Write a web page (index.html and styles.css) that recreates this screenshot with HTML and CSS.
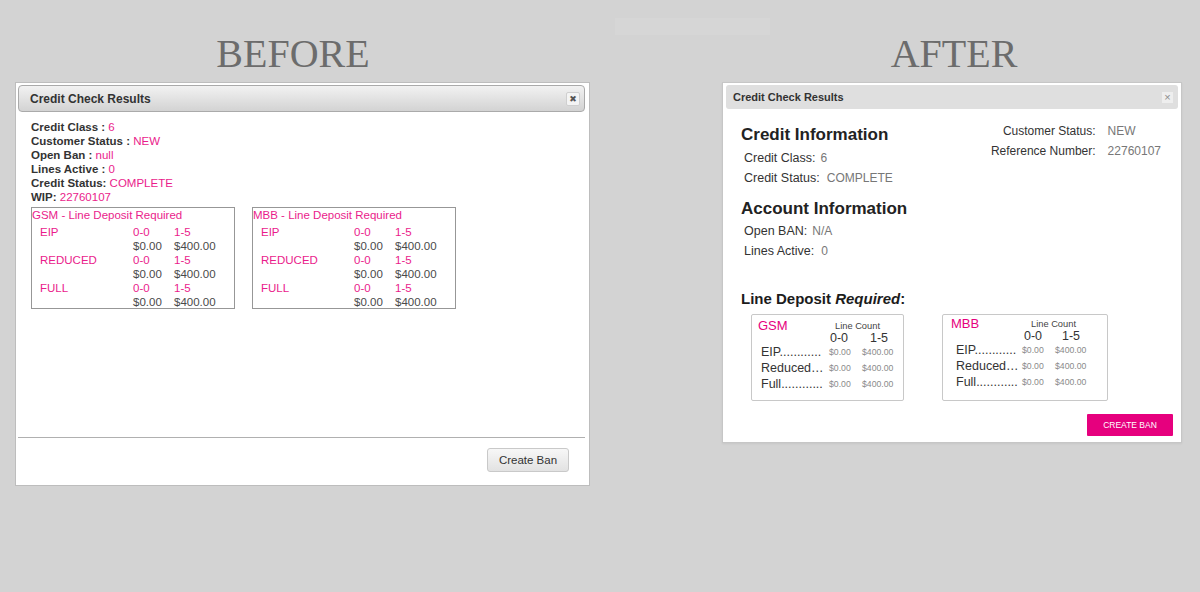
FILE: index.html
```html
<!DOCTYPE html>
<html lang="en">
<head>
<meta charset="utf-8">
<title>Credit Check Results – Before / After</title>
<link rel="stylesheet" href="styles.css">
</head>
<body>
<div class="glare"></div>
<main class="page">
  <section class="col col--before">
    <h1 class="stage-title stage-title--before">BEFORE</h1>
    <div class="old-dialog">
      <div class="old-header">
        <span class="old-title">Credit Check Results</span>
        <span class="old-close">✖</span>
      </div>
      <div class="old-body">
        <div class="old-line"><b>Credit Class :</b> <span class="pink">6</span></div>
        <div class="old-line"><b>Customer Status :</b> <span class="pink">NEW</span></div>
        <div class="old-line"><b>Open Ban :</b> <span class="pink">null</span></div>
        <div class="old-line"><b>Lines Active :</b> <span class="pink">0</span></div>
        <div class="old-line"><b>Credit Status:</b> <span class="pink">COMPLETE</span></div>
        <div class="old-line"><b>WIP:</b> <span class="pink">22760107</span></div>
        <div class="old-tables">
          <div class="old-table">
            <div class="old-table-title pink">GSM - Line Deposit Required</div>
            <div class="old-grid">
              <span class="pink">EIP</span><span class="pink">0-0</span><span class="pink">1-5</span>
              <span></span><span>$0.00</span><span>$400.00</span>
              <span class="pink">REDUCED</span><span class="pink">0-0</span><span class="pink">1-5</span>
              <span></span><span>$0.00</span><span>$400.00</span>
              <span class="pink">FULL</span><span class="pink">0-0</span><span class="pink">1-5</span>
              <span></span><span>$0.00</span><span>$400.00</span>
            </div>
          </div>
          <div class="old-table">
            <div class="old-table-title pink">MBB - Line Deposit Required</div>
            <div class="old-grid">
              <span class="pink">EIP</span><span class="pink">0-0</span><span class="pink">1-5</span>
              <span></span><span>$0.00</span><span>$400.00</span>
              <span class="pink">REDUCED</span><span class="pink">0-0</span><span class="pink">1-5</span>
              <span></span><span>$0.00</span><span>$400.00</span>
              <span class="pink">FULL</span><span class="pink">0-0</span><span class="pink">1-5</span>
              <span></span><span>$0.00</span><span>$400.00</span>
            </div>
          </div>
        </div>
      </div>
      <div class="old-footer">
        <button class="old-btn" type="button">Create Ban</button>
      </div>
    </div>
  </section>

  <section class="col col--after">
    <h1 class="stage-title stage-title--after">AFTER</h1>
    <div class="new-dialog">
      <div class="new-header">
        <span class="new-title">Credit Check Results</span>
        <span class="new-close">×</span>
      </div>
      <div class="new-body">
        <div class="new-top">
          <div class="new-info">
            <h2 class="new-section-title">Credit Information</h2>
            <div class="new-rows">
              <div class="new-row">Credit Class:<span class="val">6</span></div>
              <div class="new-row">Credit Status:<span class="val val--wide">COMPLETE</span></div>
            </div>
            <h2 class="new-section-title new-section-title--gap">Account Information</h2>
            <div class="new-rows new-rows--tight">
              <div class="new-row">Open BAN:<span class="val">N/A</span></div>
              <div class="new-row">Lines Active:<span class="val val--wide">0</span></div>
            </div>
          </div>
          <div class="new-status">
            <span class="status-label">Customer Status:</span><span class="status-val">NEW</span>
            <span class="status-label">Reference Number:</span><span class="status-val">22760107</span>
          </div>
        </div>

        <div class="deposit-heading">Line Deposit <em>Required</em>:</div>
        <div class="deposit-row">
          <div class="deposit-box">
            <span class="dep-name">GSM</span>
            <span class="dep-count">Line Count</span>
            <span class="dep-blank"></span>
            <span class="dep-range dep-range--a">0-0</span>
            <span class="dep-range dep-range--b">1-5</span>
            <span class="dep-label">EIP............</span><span class="dep-val">$0.00</span><span class="dep-val">$400.00</span>
            <span class="dep-label">Reduced…</span><span class="dep-val">$0.00</span><span class="dep-val">$400.00</span>
            <span class="dep-label">Full............</span><span class="dep-val">$0.00</span><span class="dep-val">$400.00</span>
          </div>
          <div class="deposit-box deposit-box--wide">
            <span class="dep-name">MBB</span>
            <span class="dep-count">Line Count</span>
            <span class="dep-blank"></span>
            <span class="dep-range dep-range--a">0-0</span>
            <span class="dep-range dep-range--b">1-5</span>
            <span class="dep-label">EIP............</span><span class="dep-val">$0.00</span><span class="dep-val">$400.00</span>
            <span class="dep-label">Reduced…</span><span class="dep-val">$0.00</span><span class="dep-val">$400.00</span>
            <span class="dep-label">Full............</span><span class="dep-val">$0.00</span><span class="dep-val">$400.00</span>
          </div>
        </div>

        <div class="new-footer">
          <button class="create-btn" type="button">CREATE BAN</button>
        </div>
      </div>
    </div>
  </section>
</main>
</body>
</html>
```

FILE: styles.css
```css
html, body {
  margin: 0;
  padding: 0;
}

body {
  width: 1200px;
  height: 592px;
  overflow: hidden;
  position: relative;
  background: #d3d3d3;
  font-family: "Liberation Sans", Arial, sans-serif;
}

/* faint light band at the top of the canvas */
.glare {
  position: absolute;
  left: 615px;
  top: 18px;
  width: 155px;
  height: 17px;
  background: rgba(255, 255, 255, 0.07);
}

.page {
  display: flex;
  align-items: flex-start;
  gap: 132px;
  padding: 34px 0 0 15px;
}

.col--before { width: 575px; }
.col--after { width: 460px; }

.stage-title {
  margin: 0 0 8px;
  font: 400 40px/40px "Liberation Serif", "Times New Roman", serif;
  color: #6c6c6c;
  text-align: center;
}
.stage-title--before { padding-right: 19px; }
.stage-title--after { padding-left: 4px; }

/* ---------- BEFORE dialog ---------- */
.old-dialog {
  height: 404px;
  box-sizing: border-box;
  background: #fff;
  border: 1px solid #bdbdbd;
  padding: 2px 4px 0 2px;
  display: flex;
  flex-direction: column;
}

.old-header {
  height: 27px;
  box-sizing: border-box;
  border: 1px solid #aaaaaa;
  border-radius: 4px;
  background: linear-gradient(#f2f2f2, #d3d3d3);
  display: flex;
  align-items: center;
  justify-content: space-between;
  padding: 0 4px 0 11px;
}

.old-title {
  font-weight: bold;
  font-size: 12px;
  color: #333;
}

.old-close {
  width: 14px;
  height: 14px;
  box-sizing: border-box;
  border: 1px solid #cfcfcf;
  border-radius: 2px;
  background: #f4f4f4;
  color: #555;
  font: 9px/12px "DejaVu Sans", sans-serif;
  text-align: center;
}

.old-body {
  flex: 1;
  padding: 8px 0 0 13px;
  font-size: 11.5px;
  line-height: 14px;
  color: #333;
}

.old-line b { font-weight: bold; }

.pink { color: #ea1c8b; }

.old-tables {
  display: flex;
  gap: 17px;
  margin-top: 3px;
}

.old-table {
  width: 204px;
  height: 102px;
  box-sizing: border-box;
  border: 1px solid #979797;
}

.old-grid {
  display: grid;
  grid-template-columns: 93px 41px auto;
  margin-top: 3px;
  padding-left: 8px;
  color: #4a4a4a;
}

.old-footer {
  border-top: 1px solid #b0b0b0;
  padding: 10px 16px 13px;
  display: flex;
  justify-content: flex-end;
}

.old-btn {
  width: 82px;
  height: 24px;
  padding: 0;
  border: 1px solid #c9c9c9;
  border-radius: 3px;
  background: linear-gradient(#f7f7f7, #e2e2e2);
  font: 11.5px "Liberation Sans", Arial, sans-serif;
  color: #333;
}

/* ---------- AFTER dialog ---------- */
.new-dialog {
  box-sizing: border-box;
  background: #fff;
  border: 1px solid #c6c6c6;
  padding: 2px 3px 6px;
  display: flex;
  flex-direction: column;
  box-shadow: 0 1px 2px rgba(0, 0, 0, 0.06);
}

.new-header {
  height: 24px;
  box-sizing: border-box;
  background: #dfdfdf;
  border-radius: 3px;
  display: flex;
  align-items: center;
  justify-content: space-between;
  padding: 0 5px 0 7px;
}

.new-title {
  font-weight: bold;
  font-size: 11px;
  color: #333;
}

.new-close {
  width: 11px;
  height: 11px;
  background: #eeeeee;
  color: #8c8c8c;
  font: 11px/11px "Liberation Sans", Arial, sans-serif;
  text-align: center;
}

.new-body {
  display: flex;
  flex-direction: column;
  padding: 0 17px 0 15px;
}

.new-top {
  display: flex;
  justify-content: space-between;
  align-items: flex-start;
}

.new-info { padding-top: 16px; }

.new-section-title {
  margin: 0;
  font-weight: bold;
  font-size: 17px;
  line-height: 20px;
  color: #222;
}
.new-section-title--gap { margin-top: 11px; }

.new-rows { margin-top: 3px; }
.new-rows--tight { margin-top: 2px; }

.new-row {
  padding-left: 3px;
  font-size: 12.5px;
  line-height: 20px;
  color: #333;
}

.val {
  margin-left: 5px;
  font-size: 12px;
  color: #777;
}
.val--wide { margin-left: 7px; }

.new-status {
  display: grid;
  grid-template-columns: auto auto;
  column-gap: 12px;
  padding-top: 12px;
  font-size: 12px;
  line-height: 20px;
}

.status-label {
  text-align: right;
  color: #333;
}

.status-val { color: #777; }

.deposit-heading {
  margin-top: 28px;
  font-weight: bold;
  font-size: 15px;
  line-height: 20px;
  color: #1c1c1c;
}

.deposit-row {
  display: flex;
  gap: 38px;
  margin-top: 5px;
  padding-left: 10px;
}

.deposit-box {
  width: 153px;
  height: 87px;
  box-sizing: border-box;
  border: 1px solid #c8c8c8;
  border-radius: 2px;
  padding: 5px 0 0 6px;
  display: grid;
  grid-template-columns: 71px 33px auto;
  grid-template-rows: 12px 12px 16px 16px 16px;
  align-items: center;
}

.deposit-box--wide {
  width: 166px;
  padding: 3px 0 0 8px;
}

.dep-name {
  font-size: 13px;
  line-height: 12px;
  color: #e6007e;
}

.dep-count {
  grid-column: span 2;
  padding-left: 6px;
  font-size: 9.3px;
  line-height: 12px;
  color: #444;
}
.deposit-box--wide .dep-count { padding-left: 9px; }

.dep-range {
  font-size: 12.5px;
  line-height: 12px;
  color: #333;
}
.dep-range--a { padding-left: 1px; }
.dep-range--b { padding-left: 8px; }
.deposit-box--wide .dep-range--a { padding-left: 2px; }
.deposit-box--wide .dep-range--b { padding-left: 7px; }

.dep-label {
  padding-left: 3px;
  white-space: nowrap;
  font-size: 12.5px;
  line-height: 16px;
  color: #333;
}
.deposit-box--wide .dep-label { padding-left: 5px; }

.dep-val {
  font-size: 8.7px;
  line-height: 16px;
  color: #8a8a8a;
}

.new-footer {
  display: flex;
  justify-content: flex-end;
  margin: 13px -12px 0 0;
}

.create-btn {
  width: 86px;
  height: 22px;
  padding: 0;
  border: 0;
  border-radius: 1px;
  background: #e6007e;
  color: #fff;
  font: 8.5px "Liberation Sans", Arial, sans-serif;
}
```
